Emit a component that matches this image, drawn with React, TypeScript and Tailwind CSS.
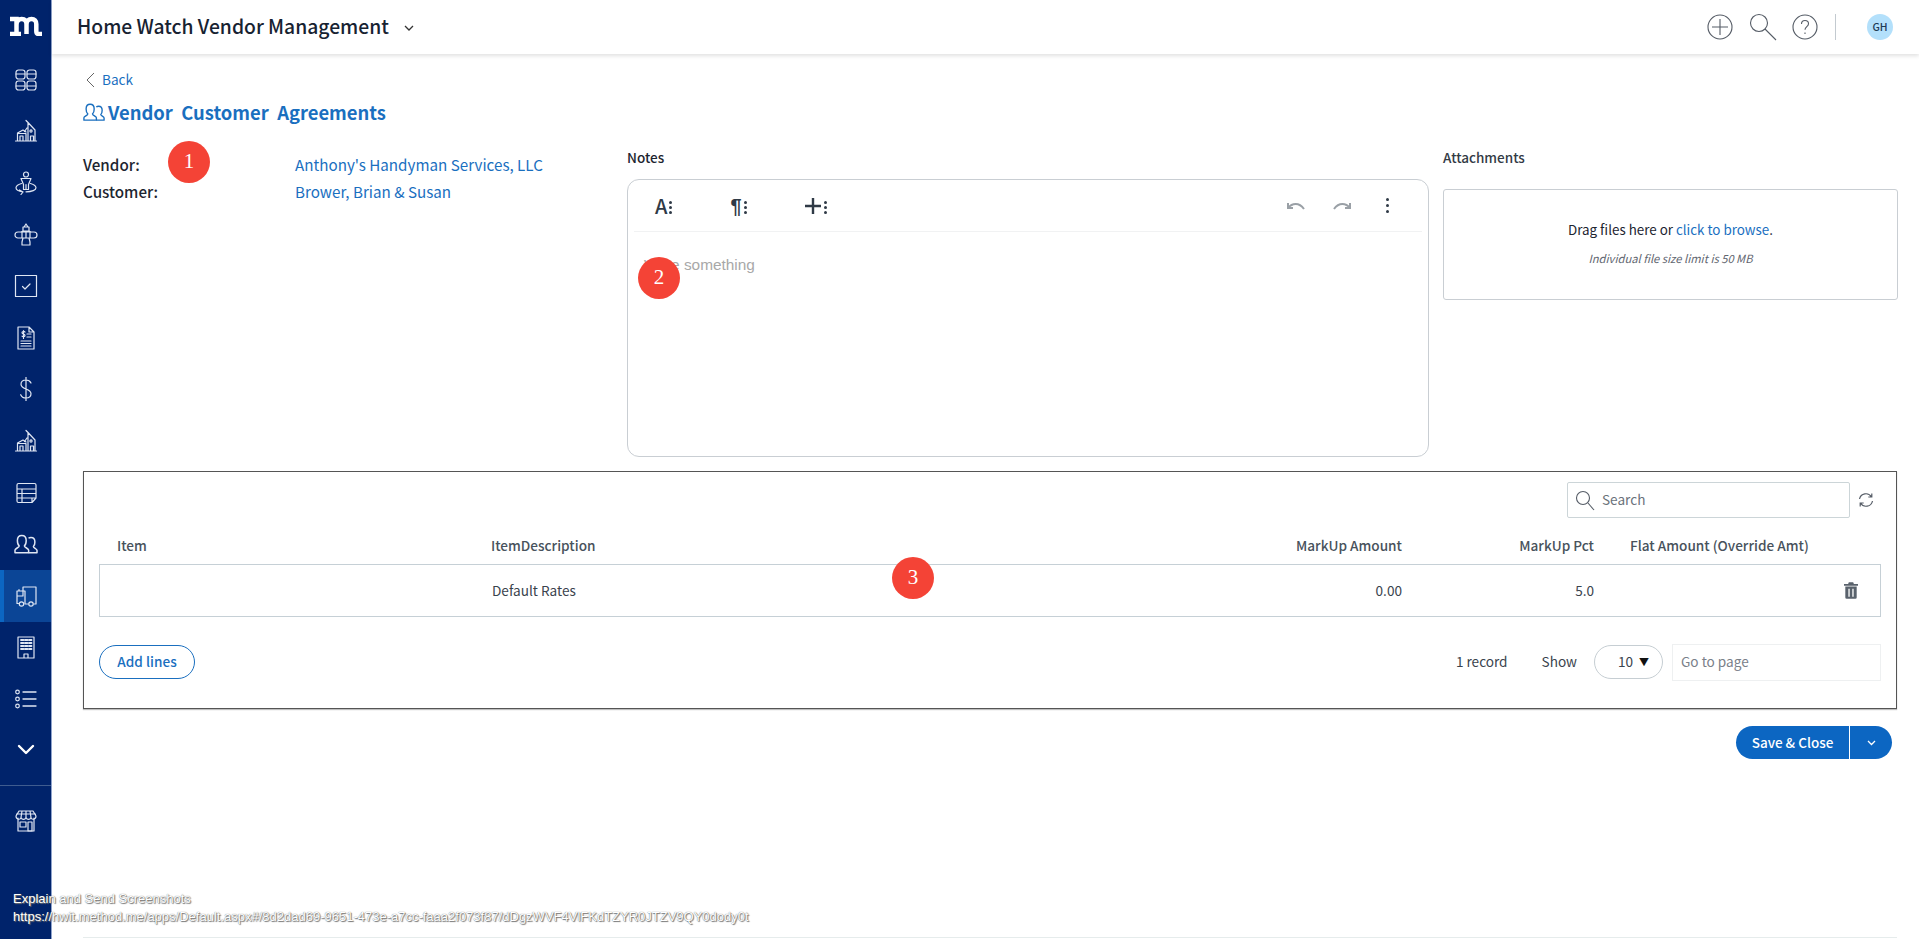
import React from "react";

const Ico = ({ children, w = 24, h = 24 }: { children: React.ReactNode; w?: number; h?: number }) => (
  <svg width={w} height={h} viewBox={`0 0 ${w} ${h}`} fill="none" stroke="currentColor" strokeWidth="1.2" strokeLinecap="round" strokeLinejoin="round">
    {children}
  </svg>
);

const House = () => (
  <Ico>
    <path d="M1.500 22h21M3.500 22v-8l5.500-3 3 2M4 14.500h8V22M6 22v-5h3v5M13 9l-2.500 3.500M14 3.500V22M14 3.500l7 7.500v11M14 3.500L12 1.500M16.500 22v-5h3v5" />
    <circle cx="17" cy="12" r="1.100" />
  </Ico>
);

const Users = ({ s = 24 }: { s?: number }) => (
  <svg width={s} height={s * 0.85} viewBox="0 0 24 20" fill="none" stroke="currentColor" strokeWidth="1.500" strokeLinejoin="round">
    <path d="M1 18.500v-2.600c0-1.600 4.200-2.600 4.200-4.200C3.600 10.500 3.400 8.600 3.400 6.400 3.400 3 5 1.200 7.800 1.200s4.400 1.800 4.400 5.200c0 2.200-.2 4.100-1.800 5.300 0 1.600 4.200 2.600 4.200 4.200v2.600z" />
    <path d="M14.600 18.500h8.400v-2.400c0-1.600-3.600-2.400-3.600-3.800 1.300-1.100 1.500-2.600 1.500-4.600 0-2.900-1.400-4.400-3.900-4.400-1 0-1.900.3-2.500.8" />
  </svg>
);

const sideIcons: React.ReactNode[] = [
  <Ico key="a">
    <rect x="2" y="2" width="9" height="9" rx="2.500" /><rect x="13" y="2" width="9" height="9" rx="2.500" />
    <rect x="2" y="13" width="9" height="9" rx="2.500" /><rect x="13" y="13" width="9" height="9" rx="2.500" />
    <path d="M2 6h9M13 6h9M2 18h9M13 18h9" />
  </Ico>,
  <House key="b" />,
  <Ico key="c">
    <circle cx="12" cy="3.500" r="2.500" />
    <path d="M7 7.500h10l-2.500 6v5h-5v-5zM12 13.500v5M7.500 12.500c-3.500 1-5.500 2.500-5.500 4.300 0 2 2.800 3.500 7 4M5.500 19l3.500 2-2 2.500M16.500 12.500c3.500 1 5.500 2.500 5.500 4.300 0 2.200-4 4-10 4" />
  </Ico>,
  <Ico key="d">
    <path d="M12 1l2 3h-4zM9 4h6v4H9zM4 9h16a3 3 0 0 1 0 6H4a3 3 0 0 1 0-6zM8 9v6M12 9v6M16 9v6M9 15l-1 4v3h8v-3l-1-4M9 8l-2 1M15 8l2 1" />
  </Ico>,
  <Ico key="e">
    <rect x="1.500" y="1.500" width="21" height="21" /><path d="M8.500 12.500l2.500 2.500 5-5" />
  </Ico>,
  <Ico key="f">
    <path d="M4 1h11l5 5v17H4zM15 1v5h5M7 15h10M7 17.500h10M7 20h10M13 8h4M13 11h4" />
    <path d="M11 6c-.6-.8-3-.8-3 .8s3 1 3 2.600-2.400 1.600-3 .8M9.500 4.500v8" />
  </Ico>,
  <Ico key="g">
    <path d="M17 6c-1-2-3-3-5-3-3 0-5 1.800-5 4.300C7 13 17 11 17 16.800 17 19.300 15 21 12 21c-2.500 0-4.500-1.200-5.300-3.300M12 0v24" />
  </Ico>,
  <House key="h" />,
  <Ico key="i">
    <path d="M3 4c0-1 .6-1.500 1.500-1.500h16c1 0 1.500.5 1.500 1.500v13l-4 4.500H4.500C3.500 21.500 3 21 3 20zM3 8h19M3 12.500h19M3 17h15M8 8v13.500M22 17h-4v4.500" />
  </Ico>,
  <Users key="j" />,
  <Ico key="k">
    <path d="M9 3h13v17h-2M9 3v4M14 20h-2M3 19.500V7h8v13h1M3 19.500h1.500M3 12h6V7M5 7V5.500" />
    <circle cx="7.500" cy="20" r="2.200" /><circle cx="17" cy="20" r="2.200" />
  </Ico>,
  <Ico key="l">
    <path d="M4 2h16v21H4zM10 23v-4h4v4" />
    <path d="M7 5h2.500M11 5h2.500M15 5h2.500M7 8h2.500M11 8h2.500M15 8h2.500M7 11h2.500M11 11h2.500M15 11h2.500M7 14h2.500M11 14h2.500M15 14h2.500" strokeWidth="1.800" />
  </Ico>,
  <Ico key="m">
    <circle cx="3.500" cy="5" r="1.800" /><circle cx="3.500" cy="12" r="1.800" /><circle cx="3.500" cy="19" r="1.800" />
    <path d="M9 5h13M9 12h13M9 19h13" strokeWidth="1.300" />
  </Ico>,
];

const Badge = ({ n, cls }: { n: number; cls: string }) => (
  <div className={`absolute z-20 flex h-[42px] w-[42px] items-center justify-center rounded-full bg-[#f44336] font-['Liberation_Serif',serif] text-[21px] text-white ${cls}`}>{n}</div>
);

function Dots() {
  return (
    <div className="ml-[2px] mt-[3px] flex flex-col gap-[2px]">
      <i className="h-[3px] w-[3px] rounded-full bg-[#2f3a46]" />
      <i className="h-[3px] w-[3px] rounded-full bg-[#2f3a46]" />
      <i className="h-[3px] w-[3px] rounded-full bg-[#2f3a46]" />
    </div>
  );
}

export default function App() {
  return (
    <div className="relative flex h-[939px] w-full overflow-hidden bg-white font-['Noto_Sans_CJK_SC','Noto_Sans',sans-serif] text-[#1d2530]">
      <aside className="flex w-[52px] shrink-0 flex-col border-r border-[#8fa3cc] bg-[#00236b] text-[#dfe6f3]">
        <div className="flex h-[54px] items-start justify-center pt-[15px]">
          <svg width="33" height="21" viewBox="0 0 33 21" fill="none" stroke="#fff" strokeWidth="4.500">
            <path d="M1 4h6.500v17M1 19h11M7.500 10c0-3.500 2.200-6 5.200-6 3 0 4.800 2 4.800 5.500V19M17.500 9.500c0-3.500 2.300-5.500 5-5.500 3 0 4.800 2 4.800 5v7c0 2 .8 3 2.200 3H33" />
          </svg>
        </div>
        {sideIcons.map((ic, i) => (
          <div key={i} className={`flex h-[51.6px] items-center justify-center ${i === 10 ? "border-l-[4px] border-[#0c66c2] bg-[#0b4596] pr-[4px]" : ""}`}>
            {ic}
          </div>
        ))}
        <div className="flex h-[51px] items-center justify-center text-white">
          <svg width="20" height="12" viewBox="0 0 20 12" fill="none" stroke="currentColor" strokeWidth="2.400" strokeLinecap="round" strokeLinejoin="round"><path d="M3 2l7 7 7-7" /></svg>
        </div>
        <div className="mt-[9px] h-px bg-[#3f5c8f]" />
        <div className="flex h-[70px] items-center justify-center">
          <Ico>
            <path d="M4 9v13h16V9M2 7c0 4 4.500 4 5 1.500C8 11 11 11 12 8.500c1 2.500 4 2.500 5 0 .5 2.500 5 2.500 5-1.500L19 2H5zM8 2L7 8.500M12 2v6.500M16 2l1 6.500M2.500 5h19" />
            <path d="M6 13h6v5H6zM14 13h4v9h-4z" />
          </Ico>
        </div>
      </aside>

      <div className="flex min-w-0 flex-1 flex-col">
        <header className="flex h-[54px] shrink-0 items-center bg-white pl-[25px] pr-[26px] shadow-[0_2px_4px_rgba(0,0,0,0.12)]">
          <span className="text-[19.300px] font-medium leading-none text-[#172231]">Home Watch Vendor Management</span>
          <svg className="ml-[15px] mt-[3px] text-[#333]" width="10" height="7" viewBox="0 0 10 7" fill="none" stroke="currentColor" strokeWidth="1.300"><path d="M1 1l4 4 4-4" /></svg>
          <div className="ml-auto flex items-center text-[#555c66]">
            <svg width="26" height="26" viewBox="0 0 26 26" fill="none" stroke="currentColor" strokeWidth="1.100"><circle cx="13" cy="13" r="12" /><path d="M13 5v16M5 13h16" /></svg>
            <svg className="ml-[16px]" width="28" height="28" viewBox="0 0 28 28" fill="none" stroke="currentColor" strokeWidth="1.100"><circle cx="10" cy="10" r="8.500" /><path d="M16 16l11 11" /></svg>
            <svg className="ml-[15px]" width="26" height="26" viewBox="0 0 26 26" fill="none" stroke="currentColor" strokeWidth="1.100"><circle cx="13" cy="13" r="12" /><path d="M9.500 10c0-2.200 1.600-3.500 3.500-3.500s3.500 1.300 3.500 3.200c0 2.800-3.500 3-3.500 6M13 18.500v1.500" /></svg>
            <div className="ml-[17px] h-[26px] w-px bg-[#c3cad0]" />
            <div className="ml-[31px] flex h-[26px] w-[26px] items-center justify-center rounded-full bg-[#b3e0fb] text-[10.500px] font-medium leading-none text-[#1d3a55]">GH</div>
          </div>
        </header>

        <main className="relative flex flex-1 flex-col pl-[31px] pr-[22px] pt-[15px]">
          <div className="flex h-[22px] items-center text-[13.600px] leading-none text-[#1a6fbf]">
            <svg className="ml-[2px] mr-[7px] text-[#666]" width="10" height="16" viewBox="0 0 10 16" fill="none" stroke="currentColor" strokeWidth="1"><path d="M9 1L2 8l7 7" /></svg>
            Back
          </div>
          <div className="mt-[7px] flex h-[28px] items-center text-[#1a6fbf]">
            <Users s={22} />
            <span className="ml-[3px] whitespace-pre text-[18.400px] font-bold leading-none">Vendor  Customer  Agreements</span>
          </div>

          <div className="mt-[16px] flex">
            <div className="w-[544px] shrink-0 pt-[9px] text-[15.200px] leading-[27px]">
              <div className="flex"><span className="w-[212px] font-medium">Vendor:</span><span className="text-[#1a6fbf]">Anthony's Handyman Services, LLC</span></div>
              <div className="flex"><span className="w-[212px] font-medium">Customer:</span><span className="text-[#1a6fbf]">Brower, Brian &amp; Susan</span></div>
            </div>
            <div className="w-[802px] shrink-0">
              <div className="h-[37px] pt-[5px] text-[13.500px] font-medium leading-[20px]">Notes</div>
              <div className="h-[278px] rounded-[12px] border border-[#c9ced3] px-[6px]">
                <div className="flex h-[52px] items-center border-b border-[#f1f2f3] pl-[21px] pr-[33px] text-[#2f3a46]">
                  <span className="text-[20px] font-medium leading-none">A</span><Dots />
                  <span className="ml-[58px] font-['Liberation_Sans',sans-serif] text-[20px] font-bold leading-none">¶</span><Dots />
                  <svg className="ml-[57px]" width="18" height="18" viewBox="0 0 18 18" fill="none" stroke="currentColor" strokeWidth="2.400"><path d="M9 1v16M1 9h16" /></svg><Dots />
                  <svg className="ml-auto text-[#9aa0a6]" width="20" height="11" viewBox="0 0 20 11" fill="none" stroke="currentColor" strokeWidth="2"><path d="M2 3v5h5M2 8c4-5 11-6 16 1" /></svg>
                  <svg className="ml-[26px] text-[#9aa0a6]" width="20" height="11" viewBox="0 0 20 11" fill="none" stroke="currentColor" strokeWidth="2"><path d="M18 3v5h-5M18 8C14 3 7 2 2 9" /></svg>
                  <div className="ml-[34px] flex flex-col gap-[3px]"><i className="h-[3px] w-[3px] rounded-full bg-[#2f3a46]" /><i className="h-[3px] w-[3px] rounded-full bg-[#2f3a46]" /><i className="h-[3px] w-[3px] rounded-full bg-[#2f3a46]" /></div>
                </div>
                <div className="pl-[10px] pt-[24px] font-['Liberation_Sans',sans-serif] text-[15.400px] leading-[18px] text-[#a8a8a8]">Write something</div>
              </div>
            </div>
            <div className="ml-[14px] w-[455px] shrink-0">
              <div className="h-[47px] pt-[5px] text-[13.500px] font-medium leading-[20px] text-[#333b45]">Attachments</div>
              <div className="flex h-[111px] flex-col items-center justify-center rounded-[3px] border border-[#c9ced3] pb-[6px]">
                <div className="text-[13.400px] leading-[20px]">Drag files here or <span className="text-[#1a6fbf]">click to browse</span>.</div>
                <div className="mt-[12px] text-[11.200px] italic leading-[14px] text-[#5f6670]">Individual file size limit is 50 MB</div>
              </div>
            </div>
          </div>

          <section className="mt-[14px] h-[238px] w-[1814px] border border-[#555] px-[15px] pt-[10px] shadow-[0_1px_1px_rgba(0,0,0,0.25)]">
            <div className="flex h-[36px] items-center justify-end pr-[6px]">
              <div className="flex h-[36px] w-[283px] items-center rounded-[2px] border border-[#ccd5d8] pl-[7px] text-[13.600px] text-[#6a727b]">
                <svg className="text-[#555c66]" width="20" height="21" viewBox="0 0 20 21" fill="none" stroke="currentColor" strokeWidth="1.100"><circle cx="8" cy="8" r="6.500" /><path d="M13 13l6 7" /></svg>
                <span className="ml-[7px] leading-none">Search</span>
              </div>
              <svg className="ml-[7px] text-[#555c66]" width="18" height="18" viewBox="0 0 18 18" fill="none" stroke="currentColor" strokeWidth="1.200"><path d="M2.500 8a6.500 6.500 0 0 1 12-2M15.500 10a6.500 6.500 0 0 1-12 2M14.800 2.500v3.500h-3.500M3.200 15.500V12h3.500" /></svg>
            </div>
            <div className="flex h-[46px] items-center pt-[9px] text-[13.600px] font-medium leading-none text-[#48525c]">
              <span className="w-[392px] pl-[18px]">Item</span>
              <span className="w-[461px]">ItemDescription</span>
              <span className="w-[450px] text-right">MarkUp Amount</span>
              <span className="w-[192px] text-right">MarkUp Pct</span>
              <span className="ml-[36px]">Flat Amount (Override Amt)</span>
            </div>
            <div className="flex h-[53px] w-[1782px] items-center border border-[#c6d0d6] text-[13.600px] leading-none text-[#3a434d]">
              <span className="w-[391px]" />
              <span className="w-[461px] pl-[1px]">Default Rates</span>
              <span className="w-[450px] text-right">0.00</span>
              <span className="w-[192px] text-right">5.0</span>
              <span className="ml-auto mr-[22px] text-[#59626c]">
                <svg width="14" height="17" viewBox="0 0 16 19" fill="currentColor"><path d="M5.500 0h5l.8 2H16v2H0V2h4.700zM1.500 5h13v12.500A1.500 1.500 0 0 1 13 19H3a1.500 1.500 0 0 1-1.500-1.500zM5 7.500v9h1.500v-9zM9.500 7.500v9H11v-9z" /></svg>
              </span>
            </div>
            <div className="mt-[28px] flex h-[34px] items-center text-[13.600px] leading-none text-[#3a434d]">
              <div className="flex h-[34px] w-[96px] items-center justify-center rounded-full border border-[#1a6fbf] font-medium text-[#1a6fbf]">Add lines</div>
              <span className="ml-auto">1 record</span>
              <span className="ml-[34px]">Show</span>
              <div className="ml-[17px] flex h-[34px] w-[69px] items-center justify-end rounded-full border border-[#c6ced3] pr-[13px]">10<span className="ml-[6px] text-[10px] text-[#111]">▼</span></div>
              <div className="ml-[9px] flex h-[37px] w-[209px] items-center border border-[#eef0f1] pl-[8px] text-[#7a8089]">Go to page</div>
            </div>
          </section>

          <div className="mr-[5px] mt-[17px] flex justify-end">
            <div className="flex h-[33px] w-[156px] overflow-hidden rounded-full bg-[#0c66c2] text-white">
              <span className="flex w-[114px] items-center justify-center border-r border-white text-[13.500px] font-medium leading-none">Save &amp; Close</span>
              <span className="flex flex-1 items-center justify-center"><svg width="9" height="6" viewBox="0 0 9 6" fill="none" stroke="currentColor" strokeWidth="1.300"><path d="M1 1l3.500 3.500L8 1" /></svg></span>
            </div>
          </div>

          <div className="mb-px mt-auto h-px bg-[#e6ecec]" />
        </main>
      </div>

      <Badge n={1} cls="left-[168px] top-[141px]" />
      <Badge n={2} cls="left-[638px] top-[257px]" />
      <Badge n={3} cls="left-[892px] top-[557px]" />

      <div className="absolute left-[13px] top-[890px] z-30 font-['Liberation_Sans',sans-serif] text-[13px] leading-[18px] text-white [text-shadow:0_0_1px_#555,1px_1px_1px_#777]">
        <div>Explain and Send Screenshots</div>
        <div>https://hwit.method.me/apps/Default.aspx#/8d2dad69-9651-473e-a7cc-faaa2f073f87/dDgzWVF4VlFKdTZYR0JTZV9QY0dody0t</div>
      </div>
    </div>
  );
}
